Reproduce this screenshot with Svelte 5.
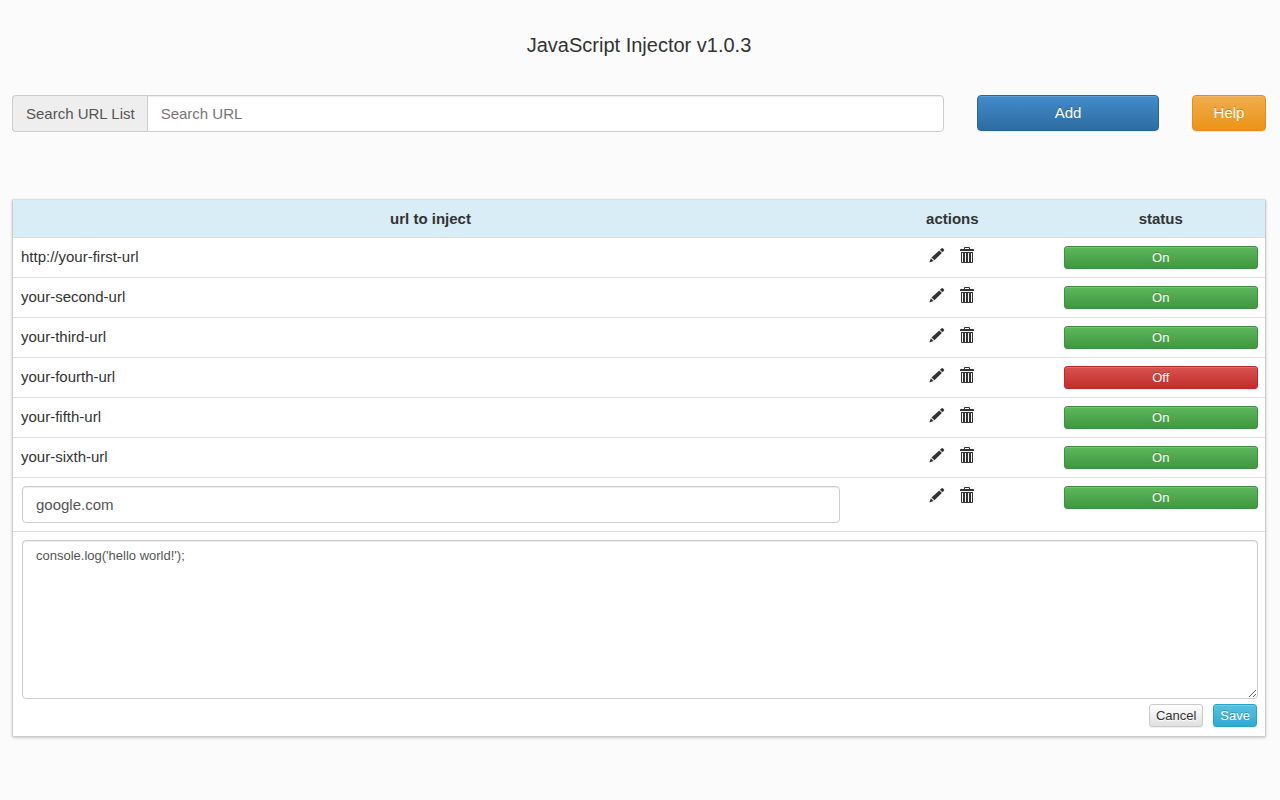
<script lang="ts">
	interface Entry {
		id: number;
		url: string;
		code: string;
		enabled: boolean;
	}

	let entries: Entry[] = $state([
		{ id: 1, url: 'http://your-first-url', code: '', enabled: true },
		{ id: 2, url: 'your-second-url', code: '', enabled: true },
		{ id: 3, url: 'your-third-url', code: '', enabled: true },
		{ id: 4, url: 'your-fourth-url', code: '', enabled: false },
		{ id: 5, url: 'your-fifth-url', code: '', enabled: true },
		{ id: 6, url: 'your-sixth-url', code: '', enabled: true },
		{ id: 7, url: 'google.com', code: "console.log('hello world!');", enabled: true }
	]);

	let search = $state('');
	let editing: number | null = $state(7);
	let draftUrl = $state('google.com');
	let draftCode = $state("console.log('hello world!');");
	let nextId = 8;

	let visible = $derived(entries.filter((entry) => entry.url.includes(search)));

	function edit(entry: Entry) {
		editing = entry.id;
		draftUrl = entry.url;
		draftCode = entry.code;
	}

	function add() {
		entries.push({ id: nextId++, url: '', code: '', enabled: true });
		edit(entries[entries.length - 1]);
	}

	function remove(entry: Entry) {
		entries = entries.filter((e) => e.id !== entry.id);
	}

	function save(entry: Entry) {
		entry.url = draftUrl;
		entry.code = draftCode;
		editing = null;
	}
</script>

<main>
	<h1>JavaScript Injector v1.0.3</h1>

	<div class="toolbar">
		<div class="input-group">
			<label for="search">Search URL List</label>
			<input id="search" class="field" type="text" placeholder="Search URL" bind:value={search} />
		</div>
		<button type="button" class="btn large primary" onclick={add}>Add</button>
		<button type="button" class="btn large warning">Help</button>
	</div>

	<div class="panel">
		<table>
			<thead>
				<tr>
					<th class="url">url to inject</th>
					<th>actions</th>
					<th>status</th>
				</tr>
			</thead>
			<tbody>
				{#each visible as entry (entry.id)}
					<tr>
						<td>
							{#if editing === entry.id}
								<input class="field boxed" type="text" aria-label="URL" bind:value={draftUrl} />
							{:else}
								{entry.url}
							{/if}
						</td>
						<td>
							<div class="actions">
								<button type="button" class="icon" aria-label="Edit" onclick={() => edit(entry)}>
									<svg viewBox="0 0 16 18" width="16" height="18">
										<path d="M10.9 3.8 12.6 2.2Q13.2 1.7 13.8 2.2L15 3.4Q15.5 4 15 4.6L13.4 6.2Z" />
										<path d="M10.2 4.4 12.9 7 5.4 14.3 2.5 11.5Z" />
										<path d="M1.8 12.2 4.7 15 .4 16.6Z" />
									</svg>
								</button>
								<button type="button" class="icon" aria-label="Delete" onclick={() => remove(entry)}>
									<svg viewBox="0 0 16 18" width="16" height="18">
										<path d="M4 3V2q0-1 1-1h4q1 0 1 1v1H9V2H5v1Z" />
										<path d="M0 5V4q0-1 1-1h12q1 0 1 1v1Z" />
										<path
											fill-rule="evenodd"
											d="M1 6h12v10q0 1-1 1H2q-1 0-1-1Zm1 1v9h1V7Zm3 0v9h1V7Zm3 0v9h1V7Zm3 0v9h1V7Z"
										/>
									</svg>
								</button>
							</div>
						</td>
						<td>
							<button
								type="button"
								class="btn small block {entry.enabled ? 'success' : 'danger'}"
								onclick={() => (entry.enabled = !entry.enabled)}
							>
								{entry.enabled ? 'On' : 'Off'}
							</button>
						</td>
					</tr>
					{#if editing === entry.id}
						<tr>
							<td class="editor" colspan="3">
								<textarea class="field boxed" aria-label="Code" spellcheck="false" bind:value={draftCode}></textarea>
								<div class="buttons">
									<button type="button" class="btn small default" onclick={() => (editing = null)}>Cancel</button>
									<button type="button" class="btn small info" onclick={() => save(entry)}>Save</button>
								</div>
							</td>
						</tr>
					{/if}
				{/each}
			</tbody>
		</table>
	</div>
</main>

<style>
	:global(body) {
		background: #fbfbfb;
	}

	main {
		padding: 32px 14px 32px 12px;
		font-family: 'Liberation Sans', Arial, sans-serif;
		font-size: 15px;
		line-height: 23px;
		color: #333;
	}

	main,
	main * {
		box-sizing: border-box;
	}

	h1 {
		margin: 0 0 37px;
		font-size: 20px;
		font-weight: 400;
		line-height: 26px;
		text-align: center;
	}

	.toolbar {
		display: grid;
		grid-template-columns: minmax(0, 1fr) 182px 74px;
		align-items: start;
		gap: 33px;
		margin-bottom: 67px;
	}

	.input-group {
		display: flex;
	}

	.input-group label {
		padding: 6px 12px 6px 13px;
		border: 1px solid #ccc;
		border-right: 0;
		border-radius: 4px 0 0 4px;
		background: #eee;
		color: #555;
		white-space: nowrap;
	}

	.input-group .field {
		flex: 1;
		min-width: 0;
		border-radius: 0 4px 4px 0;
	}

	.field {
		display: block;
		height: 37px;
		margin: 0;
		padding: 6px 13px;
		border: 1px solid #ccc;
		border-radius: 4px;
		background: #fff;
		box-shadow: inset 0 1px 1px rgba(0, 0, 0, 0.075);
		color: #555;
		font: inherit;
	}

	.field::placeholder {
		color: #777;
	}

	.boxed {
		width: calc(100% - 1px);
		margin-left: 1px;
	}

	textarea.field {
		height: 159px;
		font-size: 13px;
		line-height: 18px;
		resize: vertical;
	}

	.btn {
		border: 1px solid transparent;
		box-shadow: inset 0 1px 0 rgba(255, 255, 255, 0.15), 0 1px 1px rgba(0, 0, 0, 0.075);
		color: #fff;
		font: inherit;
		text-shadow: 0 -1px 0 rgba(0, 0, 0, 0.2);
		cursor: pointer;
	}

	.large {
		height: 36px;
		padding: 0 12px 2px;
		border-radius: 4px;
	}

	.small {
		height: 23px;
		padding: 0 6px;
		border-radius: 3px;
		font-size: 13px;
		line-height: 18px;
	}

	.block {
		display: block;
		width: 100%;
	}

	.primary {
		border-color: #2b669a;
		background: linear-gradient(#428bca, #2d6ca2);
	}

	.warning {
		border-color: #e38d13;
		background: linear-gradient(#f0ad4e, #eb9316);
	}

	.success {
		border-color: #3e8f3e;
		background: linear-gradient(#5cb85c, #419641);
	}

	.danger {
		border-color: #b92c28;
		background: linear-gradient(#d9534f, #c12e2a);
	}

	.info {
		border-color: #28a4c9;
		background: linear-gradient(#5bc0de, #2aabd2);
	}

	.default {
		border-color: #ccc;
		background: linear-gradient(#fff, #e0e0e0);
		color: #333;
		text-shadow: 0 1px 0 #fff;
	}

	.panel {
		border: 1px solid #ccc;
		border-top-color: #ddd;
		border-radius: 2px;
		background: #fff;
		box-shadow: 0 1px 3px rgba(0, 0, 0, 0.2);
	}

	table {
		width: 100%;
		table-layout: fixed;
		border-spacing: 0;
	}

	th {
		height: 37px;
		padding: 7px 8px;
		background: #d9edf7;
	}

	.url {
		width: 66.7%;
	}

	td {
		padding: 8px 7px;
		border-top: 1px solid #ddd;
		line-height: 21px;
		vertical-align: top;
	}

	td:first-child {
		padding: 8px;
	}

	td.editor {
		padding-right: 7px;
	}

	.actions {
		display: flex;
		justify-content: center;
		gap: 15px;
	}

	.icon {
		width: 16px;
		height: 18px;
		padding: 0;
		border: 0;
		background: none;
		color: #333;
		cursor: pointer;
	}

	.icon svg {
		display: block;
		fill: currentColor;
	}

	.buttons {
		display: flex;
		justify-content: flex-end;
		gap: 10px;
		padding: 5px 1px 1px 0;
	}
</style>
